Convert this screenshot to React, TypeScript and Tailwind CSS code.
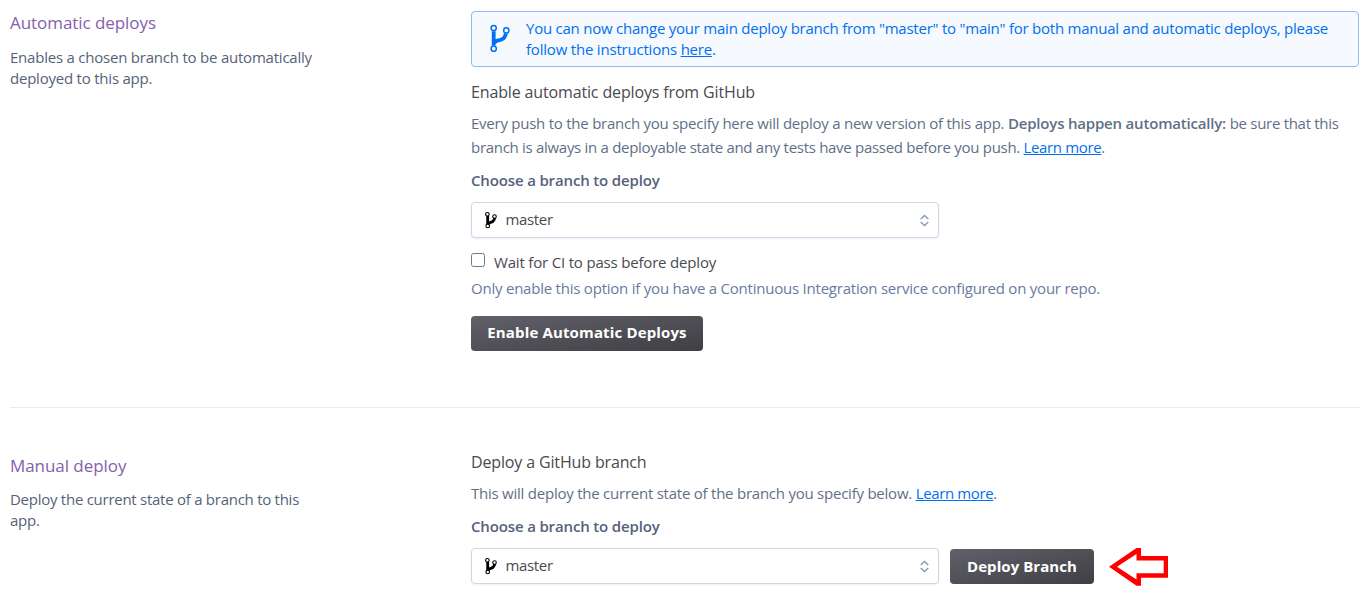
type IconProps = { className?: string };

function BranchIcon({ className }: IconProps) {
  return (
    <svg className={className} viewBox="0 0 20 28" fill="none" stroke="currentColor">
      <path d="M3.7 7.3V21.5M4.4 19.4C5.2 16 8 16.9 11 15.8C14.2 14.6 15.4 12.6 15.8 9.5" strokeWidth="3.8" />
      <circle cx="3.7" cy="4" r="2.6" fill="#f6f9fe" strokeWidth="1.5" />
      <circle cx="16.3" cy="6.4" r="2.6" fill="#f6f9fe" strokeWidth="1.5" />
      <circle cx="3.7" cy="24.7" r="2.6" fill="#f6f9fe" strokeWidth="1.5" />
    </svg>
  );
}

function SmallBranchIcon({ className }: IconProps) {
  return (
    <svg className={className} viewBox="0 0 14 18" fill="none" stroke="currentColor">
      <path d="M3.7 5V14M4.2 13C5.5 10.8 7 11.8 8.8 10.5C10.2 9.5 10.7 8.2 10.6 6.6" strokeWidth="2.8" />
      <circle cx="3.4" cy="3.3" r="1.8" fill="#fff" strokeWidth="1.1" />
      <circle cx="10.5" cy="5.6" r="1.8" fill="#fff" strokeWidth="1.1" />
      <circle cx="3.7" cy="14.9" r="1.8" fill="#fff" strokeWidth="1.1" />
    </svg>
  );
}

function SortIcon() {
  return (
    <svg className="h-3.5 w-3" viewBox="0 0 12 14" fill="none" stroke="#8b9bb8" strokeWidth="1.6">
      <path d="M2.7 6L6.5 2.5L10.3 6M2.7 9L6.5 12.5L10.3 9" />
    </svg>
  );
}

function BranchSelect() {
  return (
    <div className="flex h-9 w-[468px] items-center rounded border border-[#cfd7e6] bg-white pr-2 pl-3 shadow-[0_1px_2px_rgba(207,215,230,0.4)]">
      <SmallBranchIcon className="h-[18px] w-3.5 text-black" />
      <span className="mb-[3px] ml-[7.5px] flex-1 leading-6 tracking-[-0.35px] text-[#4a4a4f]">master</span>
      <SortIcon />
    </div>
  );
}

const linkClass = "text-[#0070f0] underline underline-offset-1";
const buttonClass =
  "h-[35px] rounded bg-linear-to-br from-[#62616a] to-[#3f3f44] text-center font-bold text-white leading-[31px]";

export default function App() {
  return (
    <main className="h-[591px] overflow-hidden bg-white pr-2 pl-2.5 font-['Open_Sans','Noto_Sans',sans-serif] text-[15px] whitespace-nowrap text-[#5f6f87]">
      <section className="flex h-[408px] border-b border-[#ebebee] pt-[11px]">
        <div className="w-[461px] shrink-0 text-[#56627a]">
          <h2 className="text-[17px] leading-6 tracking-[-0.06px] text-[#8560ab]">Automatic deploys</h2>
          <p className="mt-3 leading-[21px] tracking-[-0.22px]">
            Enables a chosen branch to be automatically
            <br />
            deployed to this app.
          </p>
        </div>
        <div className="w-[888px]">
          <div className="flex h-14 rounded border border-[#8bbcf2] bg-[#f6f9fe] pt-1.5 text-[#0070f0]">
            <BranchIcon className="mt-1.5 ml-[18px] h-7 w-5" />
            <p className="ml-4 leading-[21px] tracking-[-0.235px]">
              You can now change your main deploy branch from "master" to "main" for both manual and automatic deploys,
              please
              <br />
              <span className="tracking-[-0.2px]">follow the instructions </span>
              <a className={linkClass}>here</a>.
            </p>
          </div>
          <h3 className="mt-[13px] text-[16px] leading-6 tracking-[-0.145px] text-[#4a4a4f]">
            Enable automatic deploys from GitHub
          </h3>
          <p className="mt-[7px] leading-6">
            <span className="tracking-[-0.245px]">
              Every push to the branch you specify here will deploy a new version of this app.{" "}
            </span>
            <b className="font-semibold tracking-[-0.19px]">Deploys happen automatically:</b>
            <span className="tracking-[-0.29px]"> be sure that this</span>
            <br />
            <span className="tracking-[-0.295px]">
              branch is always in a deployable state and any tests have passed before you push.{" "}
            </span>
            <a className={`${linkClass} tracking-[-0.36px]`}>Learn more</a>.
          </p>
          <p className="mt-[9px] leading-6 font-semibold tracking-[-0.15px] text-[#56627a]">
            Choose a branch to deploy
          </p>
          <div className="mt-2.5">
            <BranchSelect />
          </div>
          <label className="mt-3 flex h-6">
            <span className="mt-[3px] h-3.5 w-3.5 rounded-[2.5px] border border-[#767676] bg-white" />
            <span className="ml-[9px] leading-6 tracking-[-0.18px] text-[#4a4a4f]">Wait for CI to pass before deploy</span>
          </label>
          <p className="mt-0.5 leading-6 tracking-[-0.224px] text-[#687b9f]">
            Only enable this option if you have a Continuous Integration service configured on your repo.
          </p>
          <button className={`${buttonClass} mt-4 block w-[232px] pb-0.5 tracking-[0.146px]`}>
            Enable Automatic Deploys
          </button>
        </div>
      </section>

      <section className="flex pt-[42px]">
        <div className="w-[461px] shrink-0 pt-1 text-[#56627a]">
          <h2 className="text-[17px] leading-6 tracking-[-0.06px] text-[#8560ab]">Manual deploy</h2>
          <p className="mt-[11px] leading-[21px] tracking-[-0.264px]">
            Deploy the current state of a branch to this
            <br />
            app.
          </p>
        </div>
        <div className="w-[888px]">
          <h3 className="text-[16px] leading-6 tracking-[-0.145px] text-[#4a4a4f]">Deploy a GitHub branch</h3>
          <p className="mt-[7px] leading-6">
            <span className="tracking-[-0.236px]">
              This will deploy the current state of the branch you specify below.{" "}
            </span>
            <a className={`${linkClass} tracking-[-0.36px]`}>Learn more</a>.
          </p>
          <p className="mt-[9px] leading-6 font-semibold tracking-[-0.15px] text-[#56627a]">
            Choose a branch to deploy
          </p>
          <div className="mt-2.5 flex h-9 items-end">
            <BranchSelect />
            <button className={`${buttonClass} ml-[11px] w-36 tracking-[0.07px]`}>Deploy Branch</button>
            <svg className="-mb-[3px] ml-[15px] h-[39px] w-[60px]" viewBox="0 0 60 39" fill="#ff0000">
              <path
                fillRule="evenodd"
                d="M0 18.8L27.5 0H32V8H59V29.7H32V37.7H27.5ZM8 18.8L27.5 31.6V25.3H54.7V12.4H27.5V6Z"
              />
            </svg>
          </div>
        </div>
      </section>
    </main>
  );
}
